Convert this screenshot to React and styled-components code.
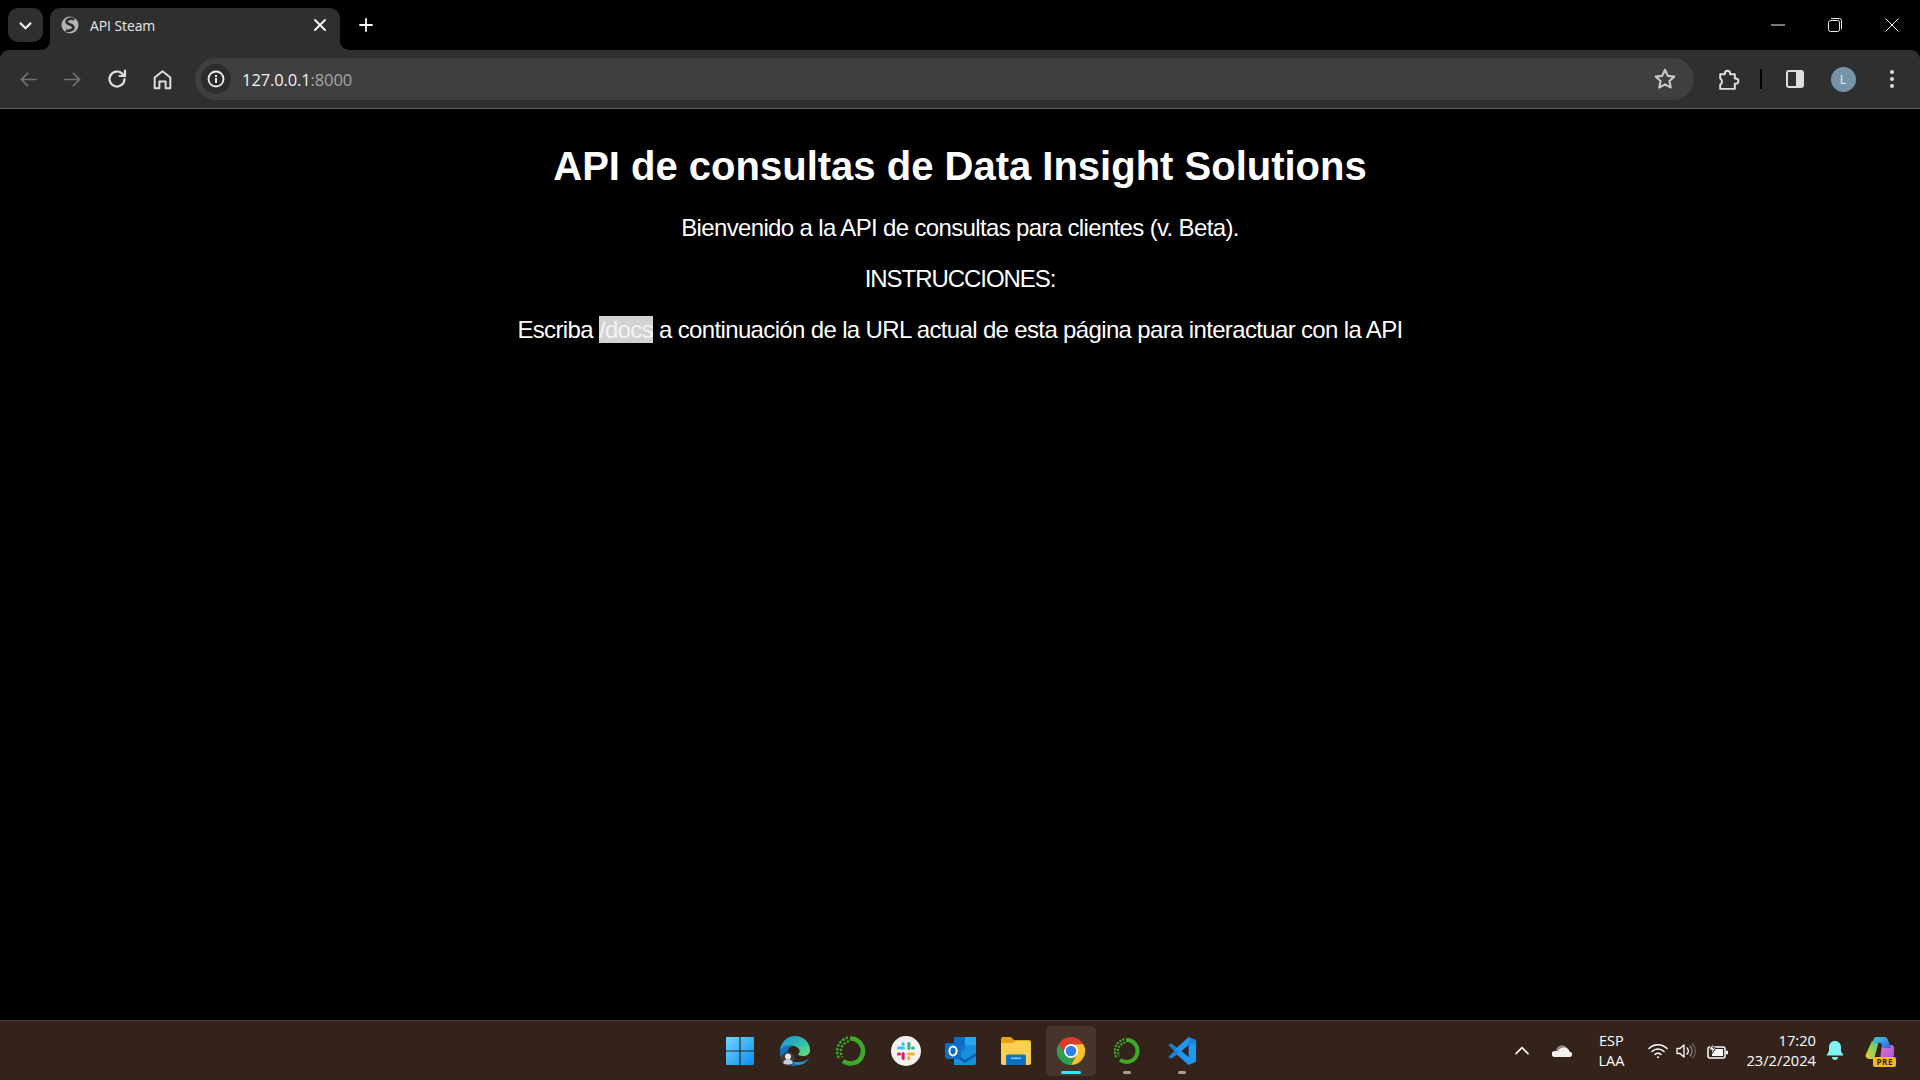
import styled, { createGlobalStyle } from "styled-components";

const Global = createGlobalStyle`
  html, body {
    margin: 0;
    height: 100%;
    background: #000;
  }
  #root {
    height: 100%;
  }
`;

const CHROME = "#2f2f2f";

const Screen = styled.div`
  display: flex;
  flex-direction: column;
  height: 100vh;
  overflow: hidden;
  font-family: "Open Sans", "Noto Sans", sans-serif;
`;

const TabStrip = styled.div`
  display: flex;
  align-items: flex-end;
  height: 50px;
  background: #000;
  flex-shrink: 0;
`;

const TabSearch = styled.button`
  display: flex;
  align-items: center;
  justify-content: center;
  width: 35px;
  height: 34px;
  padding: 0;
  margin: 0 7px 8px 8px;
  border: 0;
  border-radius: 10px;
  background: ${CHROME};
`;

const Tab = styled.div`
  position: relative;
  display: flex;
  align-items: center;
  width: 290px;
  height: 42px;
  padding: 0 9px 8px 11px;
  box-sizing: border-box;
  background: ${CHROME};
  border-radius: 10px 10px 0 0;

  &::before,
  &::after {
    content: "";
    position: absolute;
    bottom: 0;
    width: 10px;
    height: 10px;
  }
  &::before {
    left: -10px;
    background: radial-gradient(circle at 0 0, transparent 10px, ${CHROME} 10.5px);
  }
  &::after {
    right: -10px;
    background: radial-gradient(circle at 100% 0, transparent 10px, ${CHROME} 10.5px);
  }
`;

const TabTitle = styled.span`
  flex: 1;
  margin-left: 11px;
  font-size: 14px;
  letter-spacing: -0.1px;
  color: #e8e8e8;
`;

const NewTab = styled.div`
  display: flex;
  align-items: center;
  justify-content: center;
  width: 24px;
  height: 34px;
  margin: 0 0 8px 14px;
`;

const WindowControls = styled.div`
  display: flex;
  align-self: flex-start;
  margin-left: auto;
`;

const WindowButton = styled.div`
  display: flex;
  align-items: center;
  justify-content: center;
  width: 57px;
  height: 49px;
`;

const Toolbar = styled.div`
  display: flex;
  align-items: center;
  height: 58px;
  padding: 0 10px;
  background: ${CHROME};
  border-radius: 9px 9px 0 0;
  flex-shrink: 0;
`;

const NavGroup = styled.div`
  display: flex;
  gap: 8.7px;
  margin-right: 15px;
`;

const ToolButton = styled.div`
  display: flex;
  align-items: center;
  justify-content: center;
  width: 36px;
  height: 36px;
  flex-shrink: 0;
  margin-left: ${({ $gap }) => $gap || 0}px;
`;

const Omnibox = styled.div`
  display: flex;
  align-items: center;
  flex: 1;
  height: 42px;
  padding: 0 16px 0 6px;
  border-radius: 21px;
  background: #3f3f3f;
`;

const InfoChip = styled.div`
  display: flex;
  align-items: center;
  justify-content: center;
  width: 30px;
  height: 30px;
  border-radius: 50%;
  background: #2c2c2c;
`;

const Url = styled.span`
  flex: 1;
  margin-left: 11px;
  font-size: 16.5px;
  letter-spacing: -0.12px;
  color: #f2f2f2;
`;

const UrlPort = styled.span`
  color: #a6a6a6;
`;

const ToolbarDivider = styled.div`
  width: 2px;
  height: 20px;
  margin-left: 15px;
  background: #000;
  flex-shrink: 0;
`;

const Avatar = styled.div`
  display: flex;
  align-items: center;
  justify-content: center;
  width: 25px;
  height: 25px;
  border-radius: 50%;
  background: #7594a8;
  color: #e9eef2;
  font-size: 12px;
`;

const ToolbarEdge = styled.div`
  height: 1px;
  background: #5c5c5c;
  flex-shrink: 0;
`;

const Page = styled.main`
  flex: 1;
  padding-top: 34px;
  background: #000;
  color: #fff;
  text-align: center;
  font-family: "Liberation Sans", Arial, sans-serif;
`;

const Heading = styled.h1`
  margin: 0 0 25px;
  font-size: 40px;
  line-height: 46px;
  font-weight: 700;
`;

const Line = styled.p`
  margin: 0 0 24px;
  font-size: 24px;
  line-height: 27px;
  letter-spacing: ${({ $tight }) => ($tight ? "-1.05px" : "-0.65px")};
`;

const Selected = styled.span`
  background: #d2d2d2;
  color: #f4f4f4;
`;

const Taskbar = styled.footer`
  display: grid;
  grid-template-columns: 1fr auto 1fr;
  align-items: center;
  height: 60px;
  box-sizing: border-box;
  background: #33231a;
  border-top: 1px solid #4b3d33;
  flex-shrink: 0;
`;

const TaskIcons = styled.div`
  display: flex;
  grid-column: 2;
  margin-left: 2px;
`;

const TaskItem = styled.div`
  position: relative;
  display: flex;
  align-items: center;
  justify-content: center;
  width: 50px;
  height: 50px;
  margin: 0 2.6px;
  border-radius: 5px;
  background: ${({ $active }) => ($active ? "#45352a" : "transparent")};

  &::after {
    content: "";
    display: ${({ $state }) => ($state ? "block" : "none")};
    position: absolute;
    left: 50%;
    bottom: 2px;
    width: ${({ $state }) => ($state === "active" ? 20 : 8)}px;
    height: 3px;
    transform: translateX(-50%);
    border-radius: 2px;
    background: ${({ $state }) => ($state === "active" ? "#2ee9f8" : "#aa9f97")};
  }
`;

const Tray = styled.div`
  display: flex;
  align-items: center;
  justify-content: flex-end;
  grid-column: 3;
  height: 100%;
  padding-right: 24px;
  color: #fff;
`;

const TrayIcon = styled.div`
  display: flex;
  align-items: center;
  justify-content: center;
  flex-shrink: 0;
  width: ${({ $w }) => $w}px;
  margin-left: ${({ $gap }) => $gap || 0}px;
`;

const Lang = styled.div`
  width: 44px;
  margin-left: 16px;
  text-align: center;
  font-size: 14.5px;
  line-height: 20px;
`;

const Clock = styled.div`
  margin: 0 0 2px 18px;
  text-align: right;
  font-size: 14.7px;
  line-height: 20px;
`;

const Copilot = styled.div`
  position: relative;
  display: flex;
  justify-content: center;
  width: 32px;
  height: 30px;
  margin-left: 20px;
`;

const PreBadge = styled.span`
  position: absolute;
  right: 0;
  bottom: -1px;
  padding: 0 3px;
  border-radius: 2px;
  background: #f7b90f;
  color: #2a2006;
  font-size: 8px;
  line-height: 10px;
  font-weight: 700;
  letter-spacing: 0.6px;
`;

const Stroke = ({ size = 20, color = "#e3e3e3", width = 1.8, children, view = 24 }) => (
  <svg width={size} height={size} viewBox={`0 0 ${view} ${view}`} fill="none" stroke={color} strokeWidth={width} strokeLinecap="round" strokeLinejoin="round">
    {children}
  </svg>
);

const WindowsLogo = () => (
  <svg width="30" height="30" viewBox="0 0 30 30">
    <defs>
      <linearGradient id="win" x1="0" y1="0" x2="1" y2="1">
        <stop offset="0" stopColor="#6fd6ff" />
        <stop offset="1" stopColor="#0c8fef" />
      </linearGradient>
    </defs>
    <path fill="url(#win)" d="M1 2a1 1 0 0 1 1-1h12.4v13.4H1zM15.6 1H28a1 1 0 0 1 1 1v12.4H15.6zM1 15.6h13.4V29H2a1 1 0 0 1-1-1zM15.6 15.6H29V28a1 1 0 0 1-1 1H15.6z" />
  </svg>
);

const EdgeLogo = () => (
  <svg width="32" height="32" viewBox="0 0 32 32">
    <defs>
      <linearGradient id="edgeTop" x1="0" y1="0" x2="1" y2="1">
        <stop offset="0" stopColor="#1a8fd8" />
        <stop offset="0.6" stopColor="#35c1a8" />
        <stop offset="1" stopColor="#7be06a" />
      </linearGradient>
    </defs>
    <path fill="url(#edgeTop)" d="M1 15C2 7 8 1 16 1c8 0 15 6 15 14 0 4-3 6-7 6-3 0-5-1-5-2 2-1 2-3 1-5-2-3-6-4-10-3C6 12 2 14 1 15z" />
    <path fill="#1273c4" d="M1 15c3-4 9-6 13-4-4 1-6 4-6 8 0 5 4 10 11 11-2 1-4 1-5 1C7 31 0 24 1 15z" />
    <path fill="#1f9bdc" d="M19 30c-7-1-11-6-11-11 0 5 6 9 13 8 4 0 7-2 9-4-2 4-6 7-11 7z" />
    <circle cx="9" cy="24" r="7" fill="#3b3b3b" />
    <circle cx="9" cy="21.5" r="3" fill="#e8e4df" />
    <path fill="#c9ccd2" d="M4 28c1-3 3-4 5-4s4 1 5 4c-2 2-8 2-10 0z" />
  </svg>
);

const RingLogo = ({ size = 32 }) => (
  <svg width={size} height={size} viewBox="0 0 32 32" fill="none">
    <path d="M15 3.500A12.500 12.500 0 1 1 8 26" stroke="#3eaa2a" strokeWidth="4.600" />
    <path d="M13 2.600A14 14 0 0 0 4.500 24" stroke="#3eaa2a" strokeWidth="2.400" strokeDasharray="2.600 1.200" />
    <path d="M14 6.200A10.500 10.500 0 0 0 7.300 22" stroke="#3eaa2a" strokeWidth="2.400" strokeDasharray="2.200 1.600" />
  </svg>
);

const SlackLogo = () => (
  <svg width="30" height="30" viewBox="0 0 30 30">
    <circle cx="15" cy="15" r="15" fill="#f4f2f0" />
    <rect x="6" y="10.6" width="8" height="3" rx="1.5" fill="#36c5f0" />
    <rect x="10.6" y="6" width="3" height="4" rx="1.5" fill="#36c5f0" />
    <rect x="16.4" y="6" width="3" height="8" rx="1.5" fill="#2eb67d" />
    <rect x="20" y="10.6" width="4" height="3" rx="1.5" fill="#2eb67d" />
    <rect x="16" y="16.4" width="8" height="3" rx="1.5" fill="#ecb22e" />
    <rect x="16.4" y="20" width="3" height="4" rx="1.5" fill="#ecb22e" />
    <rect x="10.6" y="16" width="3" height="8" rx="1.5" fill="#e01e5a" />
    <rect x="6" y="16.4" width="4" height="3" rx="1.5" fill="#e01e5a" />
  </svg>
);

const OutlookLogo = () => (
  <svg width="32" height="30" viewBox="0 0 32 30">
    <rect x="9" y="1" width="22" height="14" fill="#0a6cc2" />
    <rect x="20" y="1" width="11" height="8" fill="#28a8ea" />
    <rect x="9" y="9" width="11" height="8" fill="#0f78d4" />
    <rect x="20" y="9" width="11" height="8" fill="#1490df" />
    <path fill="#1591dd" d="M9 15h22v12a2 2 0 0 1-2 2H9z" />
    <path fill="#0b5ea8" d="M9 17l11 7 11-7v3l-11 7-11-7z" />
    <rect x="0" y="7" width="16" height="16" rx="2" fill="#0e6dbe" />
    <ellipse cx="8" cy="15" rx="3.6" ry="4.4" fill="none" stroke="#fff" strokeWidth="2" />
  </svg>
);

const FolderLogo = () => (
  <svg width="30" height="28" viewBox="0 0 30 28">
    <path fill="#e3a312" d="M0 2a2 2 0 0 1 2-2h8l3 3h15a2 2 0 0 1 2 2v6H0z" />
    <path fill="#fcd04f" d="M0 6h12l3-2h13a2 2 0 0 1 2 2v20a2 2 0 0 1-2 2H2a2 2 0 0 1-2-2z" />
    <path fill="#0d72c4" d="M5 19a1.5 1.5 0 0 1 1.5-1.5h17A1.5 1.5 0 0 1 25 19v9H5z" />
    <rect x="10" y="20.5" width="10" height="1.6" fill="#7fc4f2" />
  </svg>
);

const ChromeLogo = () => (
  <svg width="30" height="30" viewBox="0 0 32 32">
    <path fill="#2f9e4f" d="M3 8.5A15 15 0 0 0 16 31l6-11-6-4z" />
    <path fill="#fbc02d" d="M29 8.5A15 15 0 0 1 16 31l6-11-6-4V9z" />
    <path fill="#da3b2c" d="M29 8.5A15 15 0 0 0 3 8.5L10 20l6-11z" />
    <circle cx="16" cy="16" r="7.4" fill="#fff" />
    <circle cx="16" cy="16" r="5.7" fill="#2f7fed" />
  </svg>
);

const VsCodeLogo = () => (
  <svg width="30" height="30" viewBox="0 0 32 32">
    <path fill="#2496ed" fillRule="evenodd" d="M23 1l8 3.6v22.8L23 31 10.5 19.6 4.6 24 1.5 22.4 8 16 1.5 9.6 4.6 8l5.9 4.4zM23 9.5L15.5 16l7.5 6.5z" />
    <path fill="#0d74bd" d="M1.5 9.6L4.6 8l5.9 4.4L8 16 1.5 22.4 4.6 24l5.9-4.4L13 16 8 16z" opacity="0.6" />
    <path fill="#1a85d6" d="M23 1l8 3.6v3L23 9.5z" />
  </svg>
);

const CopilotLogo = () => (
  <svg width="30" height="26" viewBox="0 0 30 26">
    <defs>
      <linearGradient id="copA" x1="0" y1="0" x2="1" y2="1">
        <stop offset="0" stopColor="#3dd6c0" />
        <stop offset="0.6" stopColor="#3b8bea" />
        <stop offset="1" stopColor="#2f5fd0" />
      </linearGradient>
      <linearGradient id="copB" x1="0" y1="1" x2="1" y2="0">
        <stop offset="0" stopColor="#f5c534" />
        <stop offset="0.5" stopColor="#9fd14a" />
        <stop offset="1" stopColor="#38c6b0" />
      </linearGradient>
      <linearGradient id="copC" x1="0" y1="0" x2="1" y2="1">
        <stop offset="0" stopColor="#e86cc0" />
        <stop offset="1" stopColor="#a05ae0" />
      </linearGradient>
    </defs>
    <path fill="url(#copC)" d="M17 9h9a3 3 0 0 1 3 3v6a5 5 0 0 1-5 5h-9z" />
    <path fill="url(#copB)" d="M7 5h7l-5 18H4a3.500 3.500 0 0 1-3-5z" />
    <path fill="url(#copA)" d="M11 1h8a4 4 0 0 1 4 3l3 8h-8l-2-5H8c0-3 1-6 3-6z" />
  </svg>
);

export default function App() {
  return (
    <Screen>
      <Global />
      <TabStrip>
        <TabSearch>
          <Stroke size={17} color="#f1f1f1" width={3}><path d="M5 9l7 7 7-7" /></Stroke>
        </TabSearch>
        <Tab>
          <svg width="18" height="18" viewBox="0 0 18 18">
            <circle cx="9" cy="9" r="8.500" fill="#b4b4b8" />
            <path fill="none" stroke="#2f2f2f" strokeWidth="2.600" d="M13.500 3.200C10 1.800 5.500 3 5.500 5.800 5.500 8.800 12.500 8 12.500 11.300 12.500 14 8 15.500 4.800 14.500" />
          </svg>
          <TabTitle>API Steam</TabTitle>
          <Stroke size={22} color="#f1f1f1" width={2.2}><path d="M6.500 6.500l11 11M17.500 6.500l-11 11" /></Stroke>
        </Tab>
        <NewTab>
          <Stroke size={18} color="#fff" width={2.4}><path d="M12 4v16M4 12h16" /></Stroke>
        </NewTab>
        <WindowControls>
          <WindowButton>
            <svg width="14" height="14" viewBox="0 0 14 14"><path d="M0 7h14" stroke="#eee" strokeWidth="1" /></svg>
          </WindowButton>
          <WindowButton>
            <svg width="14" height="14" viewBox="0 0 14 14" fill="none" stroke="#eee" strokeWidth="1">
              <rect x="0.500" y="2.500" width="11" height="11" rx="2" />
              <path d="M3 .5h8.500a2 2 0 0 1 2 2V11" />
            </svg>
          </WindowButton>
          <WindowButton>
            <svg width="14" height="14" viewBox="0 0 14 14"><path d="M.5.5l13 13M13.500.5l-13 13" stroke="#eee" strokeWidth="1" /></svg>
          </WindowButton>
        </WindowControls>
      </TabStrip>

      <Toolbar>
        <NavGroup>
          <ToolButton>
            <Stroke size={23} color="#727272" width={1.8}><path d="M20 12H5M11 5.500L4.500 12l6.500 6.500" /></Stroke>
          </ToolButton>
          <ToolButton>
            <Stroke size={23} color="#727272" width={1.8}><path d="M4 12h15M13 5.500l6.500 6.500-6.500 6.500" /></Stroke>
          </ToolButton>
          <ToolButton>
            <Stroke size={24} color="#dedede" width={2.2}><path d="M19.500 12a7.500 7.500 0 1 1-2.300-5.400L20 9" /><path d="M20 3.500V9h-5.500" /></Stroke>
          </ToolButton>
          <ToolButton>
            <Stroke size={25} color="#dedede" width={1.9}><path d="M4.500 20.500V10L12 4l7.500 6v10.500H15V14H9v6.500z" /></Stroke>
          </ToolButton>
        </NavGroup>
        <Omnibox>
          <InfoChip>
            <svg width="18" height="18" viewBox="0 0 18 18">
              <circle cx="9" cy="9" r="7.500" fill="none" stroke="#eee" strokeWidth="1.800" />
              <rect x="8" y="8" width="2" height="5" fill="#eee" />
              <rect x="8" y="5" width="2" height="2" fill="#eee" />
            </svg>
          </InfoChip>
          <Url>127.0.0.1<UrlPort>:8000</UrlPort></Url>
          <Stroke size={26} color="#c9c9c9" width={1.9}>
            <path d="M12 3.500l2.600 5.600 6 .7-4.500 4.100 1.200 6-5.300-3-5.300 3 1.200-6-4.500-4.100 6-.7z" />
          </Stroke>
        </Omnibox>
        <ToolButton $gap={15}>
          <Stroke size={25} color="#dedede" width={1.9}>
            <path d="M5 7H9.500V6a2.500 2.500 0 0 1 5 0V7H19V11H20a2.500 2.500 0 0 1 0 5H19V21H5V17a3.500 3.500 0 0 0 0-6z" />
          </Stroke>
        </ToolButton>
        <ToolbarDivider />
        <ToolButton $gap={15}>
          <svg width="18" height="18" viewBox="0 0 18 18">
            <rect x="1" y="1" width="16" height="16" rx="2" fill="none" stroke="#dedede" strokeWidth="2" />
            <path d="M10 1h5a2 2 0 0 1 2 2v12a2 2 0 0 1-2 2h-5z" fill="#dedede" />
          </svg>
        </ToolButton>
        <ToolButton $gap={12}>
          <Avatar>L</Avatar>
        </ToolButton>
        <ToolButton $gap={13}>
          <svg width="6" height="20" viewBox="0 0 6 20" fill="#dedede">
            <circle cx="3" cy="3" r="2" />
            <circle cx="3" cy="10" r="2" />
            <circle cx="3" cy="17" r="2" />
          </svg>
        </ToolButton>
      </Toolbar>
      <ToolbarEdge />

      <Page>
        <Heading>API de consultas de Data Insight Solutions</Heading>
        <Line>Bienvenido a la API de consultas para clientes (v. Beta).</Line>
        <Line $tight>INSTRUCCIONES:</Line>
        <Line>Escriba <Selected>/docs</Selected> a continuación de la URL actual de esta página para interactuar con la API</Line>
      </Page>

      <Taskbar>
        <TaskIcons>
          <TaskItem><WindowsLogo /></TaskItem>
          <TaskItem><EdgeLogo /></TaskItem>
          <TaskItem><RingLogo /></TaskItem>
          <TaskItem><SlackLogo /></TaskItem>
          <TaskItem><OutlookLogo /></TaskItem>
          <TaskItem><FolderLogo /></TaskItem>
          <TaskItem $active $state="active"><ChromeLogo /></TaskItem>
          <TaskItem $state="open"><RingLogo size={28} /></TaskItem>
          <TaskItem $state="open"><VsCodeLogo /></TaskItem>
        </TaskIcons>
        <Tray>
          <TrayIcon $w={16}>
            <Stroke size={16} color="#fff" width={2.4}><path d="M3 16l9-9 9 9" /></Stroke>
          </TrayIcon>
          <TrayIcon $w={22} $gap={21}>
            <svg width="21" height="13" viewBox="0 0 21 13">
              <path fill="#8d8580" d="M4 7a6 6 0 0 1 11-3c-3 0-5 1-6 3z" />
              <path fill="#f3f1ef" d="M3 13a3 3 0 0 1-.5-6H6c1-2 3-3.500 6-3.500 3.500 0 5 2 5.500 4a2.800 2.800 0 0 1 .5 5.500z" />
            </svg>
          </TrayIcon>
          <Lang>ESP<br />LAA</Lang>
          <TrayIcon $w={20} $gap={15}>
            <svg width="20" height="16" viewBox="0 0 20 16" fill="none" stroke="#fff" strokeWidth="1.500" strokeLinecap="round">
              <path d="M1 5.500a12.500 12.500 0 0 1 18 0" />
              <path d="M4 8.500a8.500 8.500 0 0 1 12 0" />
              <path d="M7 11.500a4.200 4.200 0 0 1 6 0" />
              <circle cx="10" cy="14.300" r="1" fill="#fff" stroke="none" />
            </svg>
          </TrayIcon>
          <TrayIcon $w={20} $gap={8}>
            <svg width="20" height="16" viewBox="0 0 20 16" fill="none" strokeLinecap="round" strokeLinejoin="round">
              <path d="M1 5.500h3L8 2v12l-4-3.500H1z" stroke="#fff" strokeWidth="1.300" />
              <path d="M11 5a4 4 0 0 1 0 6" stroke="#fff" strokeWidth="1.300" />
              <path d="M14 3a7 7 0 0 1 0 10" stroke="#8d8580" strokeWidth="1.200" />
              <path d="M16.500 1a10 10 0 0 1 0 14" stroke="#6d6560" strokeWidth="1.200" />
            </svg>
          </TrayIcon>
          <TrayIcon $w={22} $gap={10}>
            <svg width="21" height="16" viewBox="0 0 21 16">
              <rect x="1" y="4" width="17" height="11" rx="2" fill="none" stroke="#fff" strokeWidth="1.500" />
              <rect x="5" y="6" width="11" height="7" fill="#fff" />
              <rect x="19" y="7.500" width="2" height="4" rx="1" fill="#fff" />
              <path d="M6 0L2 7h3l-1 5 5-7H6z" fill="#fff" stroke="#33231a" strokeWidth="1" />
            </svg>
          </TrayIcon>
          <Clock>17:20<br />23/2/2024</Clock>
          <TrayIcon $w={18} $gap={10}>
            <svg width="18" height="20" viewBox="0 0 18 20" fill="#7ff3f3">
              <path d="M9 0c3.500 0 6 2.700 6 6v4l2.500 4.500H.5L3 10V6c0-3.300 2.500-6 6-6z" />
              <path d="M6 16h6a3 3 0 0 1-6 0z" />
            </svg>
          </TrayIcon>
          <Copilot>
            <CopilotLogo />
            <PreBadge>PRE</PreBadge>
          </Copilot>
        </Tray>
      </Taskbar>
    </Screen>
  );
}
